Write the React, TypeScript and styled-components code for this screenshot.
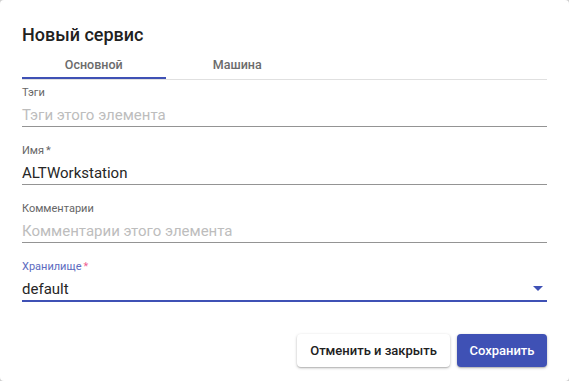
import React from "react";
import styled, { createGlobalStyle } from "styled-components";

const Global = createGlobalStyle`
  html, body { margin: 0; padding: 0; background: #cfcfcf; }
  body { font-family: Roboto, "Noto Sans", sans-serif; }
  * { box-sizing: border-box; }
`;

const Dialog = styled.div`
  width: 569px;
  height: 381px;
  background: #fff;
  border-radius: 4px;
  padding: 23px 22px 14px 22px;
  display: flex;
  flex-direction: column;
`;

const Title = styled.h2`
  margin: 0;
  font-size: 18px;
  line-height: 24px;
  font-weight: 500;
  color: #212121;
`;

const Tabs = styled.div`
  display: flex;
  margin-top: 3px;
  border-bottom: 1px solid #e0e0e0;
`;

const Tab = styled.div<{ $active?: boolean }>`
  width: 143.5px;
  height: 29px;
  display: flex;
  align-items: center;
  justify-content: center;
  font-size: 12.5px;
  font-weight: 500;
  color: #6b6b6b;
  border-bottom: 2px solid ${(p) => (p.$active ? "#3f51b5" : "transparent")};
  padding-top: 2px;
`;

const Fields = styled.div`
  display: flex;
  flex-direction: column;
  gap: 17px;
  padding-top: 6px;
`;

const Field = styled.div<{ $focused?: boolean }>`
  display: flex;
  flex-direction: column;
  border-bottom: ${(p) => (p.$focused ? "2px solid #3f51b5" : "1px solid #949494")};
`;

const Label = styled.div<{ $focused?: boolean }>`
  font-size: 11px;
  line-height: 14px;
  color: ${(p) => (p.$focused ? "#5c6bc0" : "#666")};
`;

const Star = styled.span<{ $focused?: boolean }>`
  color: ${(p) => (p.$focused ? "#f06292" : "#666")};
  margin-left: 2px;
`;

const InputRow = styled.div`
  display: flex;
  align-items: center;
  justify-content: space-between;
  height: 26px;
  padding-top: 3px;
`;

const Value = styled.span<{ $placeholder?: boolean }>`
  font-size: 15px;
  color: ${(p) => (p.$placeholder ? "#bdbdbd" : "#262626")};
`;

const Arrow = styled.svg`
  width: 10px;
  height: 5px;
  margin-right: 4px;
`;

const Actions = styled.div`
  margin-top: auto;
  display: flex;
  justify-content: flex-end;
  gap: 7px;
`;

const Button = styled.button<{ $primary?: boolean }>`
  height: 33px;
  padding: 0 ${(p) => (p.$primary ? "12.5px" : "13px")};
  border: none;
  border-radius: 4px;
  font-family: Roboto, sans-serif;
  font-size: 13px;
  font-weight: 500;
  background: ${(p) => (p.$primary ? "#3f51b5" : "#fff")};
  color: ${(p) => (p.$primary ? "#fff" : "#212121")};
  box-shadow: 0 1px 3px rgba(0, 0, 0, 0.25), 0 1px 1px rgba(0, 0, 0, 0.12);
`;

export default function App() {
  return (
    <>
      <Global />
      <Dialog>
        <Title>Новый сервис</Title>
        <Tabs>
          <Tab $active>Основной</Tab>
          <Tab>Машина</Tab>
        </Tabs>
        <Fields>
          <Field>
            <Label>Тэги</Label>
            <InputRow>
              <Value $placeholder>Тэги этого элемента</Value>
            </InputRow>
          </Field>
          <Field>
            <Label>
              Имя<Star>*</Star>
            </Label>
            <InputRow>
              <Value>ALTWorkstation</Value>
            </InputRow>
          </Field>
          <Field>
            <Label>Комментарии</Label>
            <InputRow>
              <Value $placeholder>Комментарии этого элемента</Value>
            </InputRow>
          </Field>
          <Field $focused>
            <Label $focused>
              Хранилище<Star $focused>*</Star>
            </Label>
            <InputRow>
              <Value>default</Value>
              <Arrow viewBox="0 0 10 5">
                <path d="M0 0 L10 0 L5 5 Z" fill="#3f51b5" />
              </Arrow>
            </InputRow>
          </Field>
        </Fields>
        <Actions>
          <Button>Отменить и закрыть</Button>
          <Button $primary>Сохранить</Button>
        </Actions>
      </Dialog>
    </>
  );
}
